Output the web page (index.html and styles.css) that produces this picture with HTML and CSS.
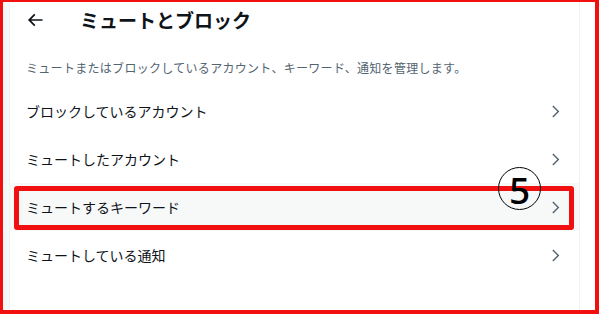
FILE: index.html
```html
<!DOCTYPE html>
<html lang="ja">
<head>
    <meta charset="UTF-8">
    <meta name="viewport" content="width=device-width, initial-scale=1.0">
    <title>ミュートとブロック</title>
    <link rel="stylesheet" href="styles.css">
</head>
<body>
    <div class="frame">
        <div class="side"></div>
        <div class="main">
            <div class="header">
                <svg class="back" viewBox="0 0 24 24"><path d="M7.414 13l5.043 5.04-1.414 1.42L3.586 12l7.457-7.46 1.414 1.42L7.414 11H21v2H7.414z"/></svg>
                <h2>ミュートとブロック</h2>
            </div>
            <p class="desc">ミュートまたはブロックしているアカウント、キーワード、通知を管理します。</p>
            <ul class="list">
                <li class="item">
                    <span>ブロックしているアカウント</span>
                    <svg class="chev" viewBox="0 0 24 24"><path d="M14.586 12L7.543 4.96l1.414-1.42L17.414 12l-8.457 8.46-1.414-1.42L14.586 12z"/></svg>
                </li>
                <li class="item">
                    <span>ミュートしたアカウント</span>
                    <svg class="chev" viewBox="0 0 24 24"><path d="M14.586 12L7.543 4.96l1.414-1.42L17.414 12l-8.457 8.46-1.414-1.42L14.586 12z"/></svg>
                </li>
                <li class="item active">
                    <span>ミュートするキーワード</span>
                    <svg class="chev" viewBox="0 0 24 24"><path d="M14.586 12L7.543 4.96l1.414-1.42L17.414 12l-8.457 8.46-1.414-1.42L14.586 12z"/></svg>
                </li>
                <li class="item">
                    <span>ミュートしている通知</span>
                    <svg class="chev" viewBox="0 0 24 24"><path d="M14.586 12L7.543 4.96l1.414-1.42L17.414 12l-8.457 8.46-1.414-1.42L14.586 12z"/></svg>
                </li>
            </ul>
        </div>
        <div class="mark"></div>
        <div class="num">5</div>
    </div>
</body>
</html>
```

FILE: styles.css
```css
body {
    margin: 0;
    font-family: "Noto Sans CJK JP", "Noto Sans", sans-serif;
    background: white;
    color: #0f1419;
}
.frame {
    position: relative;
    box-sizing: border-box;
    width: 599px;
    height: 314px;
    border-style: solid;
    border-color: #f01010;
    border-width: 2px 4px 4px 3px;
    display: flex;
    overflow: hidden;
}
.side {
    width: 6px;
    background: #f7f9f9;
    border-right: 1px solid #eff3f4;
}
.main {
    width: 569px;
    border-right: 1px solid #eff3f4;
}
.header {
    height: 36px;
    display: flex;
    align-items: center;
    padding-left: 15px;
}
.back {
    width: 20px;
    height: 20px;
    fill: #0f1419;
    margin-right: 35px;
}
h2 {
    margin: 0;
    font-size: 19px;
    font-weight: 700;
    line-height: 24px;
}
.desc {
    margin: 0;
    padding: 22px 16px 11px;
    font-size: 12px;
    line-height: 16px;
    letter-spacing: 0.3px;
    color: #536471;
}
.list {
    list-style: none;
    margin: 0;
    padding: 0;
}
.item {
    height: 48px;
    display: flex;
    align-items: center;
    justify-content: space-between;
    padding: 0 15px 0 16px;
    font-size: 14px;
}
.item.active {
    background: #f7f9f9;
}
.chev {
    width: 17px;
    height: 17px;
    fill: #536471;
}
.mark {
    position: absolute;
    left: 11px;
    top: 184px;
    width: 560px;
    height: 44px;
    box-sizing: border-box;
    border: 5px solid #f01010;
    border-radius: 3px;
}
.num {
    position: absolute;
    left: 495px;
    top: 165px;
    box-sizing: border-box;
    width: 43px;
    height: 43px;
    border: 1.5px solid #000;
    border-radius: 50%;
    display: flex;
    align-items: center;
    justify-content: center;
    padding-top: 2px;
    font-family: "Noto Sans", sans-serif;
    font-size: 37px;
    font-weight: 500;
    line-height: 1;
    color: #000;
}
```
